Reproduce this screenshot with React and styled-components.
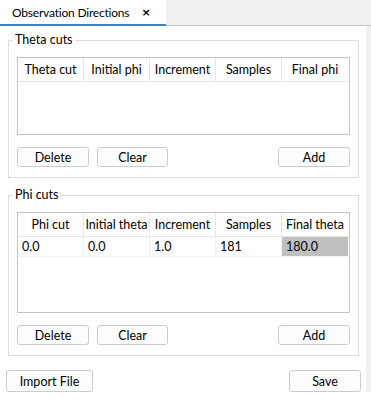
import React from "react";
import styled, { createGlobalStyle } from "styled-components";

const Global = createGlobalStyle`
  html, body { margin: 0; padding: 0; background: #ffffff; }
  body { font-family: Lato, "Noto Sans", sans-serif; font-size: 12.5px; color: #000; }
  * { box-sizing: border-box; }
`;

const Page = styled.div`
  width: 371px;
  height: 408px;
  display: flex;
  flex-direction: column;
  background: #ffffff;
`;

const TabBar = styled.div`
  height: 26px;
  display: flex;
  background: #f0f0f0;
  border-bottom: 1px solid #c8c8c8;
`;

const Tab = styled.div`
  width: 166px;
  height: 26px;
  margin-bottom: -1px;
  background: #ffffff;
  border-bottom: 2px solid #4182c4;
  display: flex;
  align-items: center;
  padding: 1px 0 0 12px;
  gap: 12px;
  white-space: nowrap;
  font-size: 12px;
  letter-spacing: -0.2px;
`;

const Close = styled.span`
  font-family: "DejaVu Sans", sans-serif;
  font-size: 11px;
  font-weight: 700;
  line-height: 1;
`;

const Body = styled.div`
  flex: 1;
  display: flex;
`;

const Panel = styled.div`
  width: 366px;
  display: flex;
  flex-direction: column;
  padding: 14px 7px 0 8px;
`;

const Side = styled.div`
  width: 5px;
  background: #f0f0f0;
  margin-bottom: 16px;
`;

const Group = styled.div`
  position: relative;
  border: 1px solid #dcdcdc;
  padding: 16px 8px 10px 8px;
  margin-top: ${(p) => p.$gap || 0}px;
`;

const GroupTitle = styled.span`
  position: absolute;
  top: -10px;
  left: 3px;
  padding: 0 2px 0 3px;
  background: #ffffff;
  line-height: 18px;
`;

const Table = styled.div`
  height: ${(p) => p.$h}px;
  border: 1px solid #c4c4c4;
  background: #ffffff;
`;

const Row = styled.div`
  display: grid;
  grid-template-columns: repeat(5, 66px);
  height: ${(p) => p.$h}px;
  border-bottom: 1px solid ${(p) => p.$line};
`;

const HeadCell = styled.div`
  display: flex;
  align-items: center;
  justify-content: center;
  border-right: 1px solid #e5e5e5;
  white-space: nowrap;
  overflow: hidden;
  &:last-child { border-right: none; }
`;

const Cell = styled.div`
  display: flex;
  align-items: center;
  padding-left: 4px;
  border-right: 1px solid #f0f0f0;
  background: ${(p) => (p.$sel ? "#c0c0c0" : "transparent")};
  &:last-child { border-right: none; }
`;

const ButtonRow = styled.div`
  display: flex;
  gap: 8px;
  margin-top: 12px;
`;

const Spacer = styled.div`
  flex: 1;
`;

const Button = styled.button`
  width: ${(p) => p.$w || 72}px;
  height: ${(p) => p.$h || 20}px;
  padding: 0;
  border: 1px solid #cccccc;
  border-radius: 3px;
  background: #fdfdfd;
  font-family: inherit;
  font-size: inherit;
  color: #000;
`;

const Footer = styled.div`
  display: flex;
  justify-content: space-between;
  margin: 14px -2px 0 -2px;
`;

const CutGroup = ({ title, gap, heads, rows, height }) => (
  <Group $gap={gap}>
    <GroupTitle>{title}</GroupTitle>
    <Table $h={height}>
      <Row $h={24} $line="#e5e5e5">
        {heads.map((h) => (
          <HeadCell key={h}>{h}</HeadCell>
        ))}
      </Row>
      {rows.map((r, i) => (
        <Row key={i} $h={20} $line="#f0f0f0">
          {r.map((c, j) => (
            <Cell key={j} $sel={j === 4}>
              {c}
            </Cell>
          ))}
        </Row>
      ))}
    </Table>
    <ButtonRow>
      <Button>Delete</Button>
      <Button $w={71}>Clear</Button>
      <Spacer />
      <Button>Add</Button>
    </ButtonRow>
  </Group>
);

export default function App() {
  return (
    <Page>
      <Global />
      <TabBar>
        <Tab>
          <span>Observation Directions</span>
          <Close>×</Close>
        </Tab>
      </TabBar>
      <Body>
        <Panel>
          <CutGroup
            title="Theta cuts"
            height={78}
            heads={["Theta cut", "Initial phi", "Increment", "Samples", "Final phi"]}
            rows={[]}
          />
          <CutGroup
            title="Phi cuts"
            gap={17}
            height={101}
            heads={["Phi cut", "Initial theta", "Increment", "Samples", "Final theta"]}
            rows={[["0.0", "0.0", "1.0", "181", "180.0"]]}
          />
          <Footer>
            <Button $w={87} $h={22}>Import File</Button>
            <Button $w={72} $h={22}>Save</Button>
          </Footer>
        </Panel>
        <Side />
      </Body>
    </Page>
  );
}
